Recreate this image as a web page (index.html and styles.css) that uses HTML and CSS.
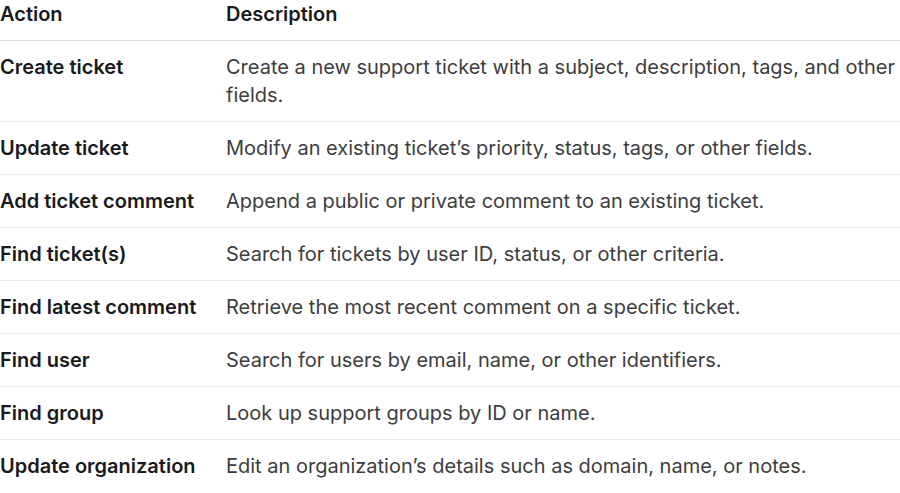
FILE: index.html
```html
<!DOCTYPE html>
<html lang="en">
  <head>
    <meta charset="UTF-8" />
    <meta name="viewport" content="width=device-width, initial-scale=1.0" />
    <link rel="stylesheet" href="styles.css">
  </head>
  <body>
    <table class="actions">
      <thead>
        <tr>
          <th class="col-action">Action</th>
          <th>Description</th>
        </tr>
      </thead>
      <tbody>
        <tr>
          <td class="name">Create ticket</td>
          <td class="desc">Create a new support ticket with a subject, description, tags, and other fields.</td>
        </tr>
        <tr>
          <td class="name">Update ticket</td>
          <td class="desc">Modify an existing ticket’s priority, status, tags, or other fields.</td>
        </tr>
        <tr>
          <td class="name">Add ticket comment</td>
          <td class="desc">Append a public or private comment to an existing ticket.</td>
        </tr>
        <tr>
          <td class="name">Find ticket(s)</td>
          <td class="desc">Search for tickets by user ID, status, or other criteria.</td>
        </tr>
        <tr>
          <td class="name">Find latest comment</td>
          <td class="desc">Retrieve the most recent comment on a specific ticket.</td>
        </tr>
        <tr>
          <td class="name">Find user</td>
          <td class="desc">Search for users by email, name, or other identifiers.</td>
        </tr>
        <tr>
          <td class="name">Find group</td>
          <td class="desc">Look up support groups by ID or name.</td>
        </tr>
        <tr>
          <td class="name">Update organization</td>
          <td class="desc">Edit an organization’s details such as domain, name, or notes.</td>
        </tr>
      </tbody>
    </table>
  </body>
</html>
```

FILE: styles.css
```css
* {
  box-sizing: border-box;
}

body {
  margin: 0;
  background-color: #ffffff;
  font-family: Inter, "Noto Sans", Arial, sans-serif;
  font-size: 20px;
  line-height: 28px;
  color: #1c1c1c;
}

.actions {
  width: 910px;
  border-collapse: collapse;
  table-layout: fixed;
}

.actions th {
  text-align: left;
  font-weight: 600;
  padding: 0 0 12px 0;
  border-bottom: 1px solid #dcdcdc;
  color: #1a1a1a;
}

.actions .col-action {
  width: 226px;
}

.actions td {
  padding: 12px 0;
  vertical-align: top;
  border-bottom: 1px solid #ececec;
}

.actions tbody tr:last-child td {
  border-bottom: none;
}

.name {
  font-weight: 600;
  color: #1a1a1a;
}

.desc {
  color: #3d3d3d;
}
```
